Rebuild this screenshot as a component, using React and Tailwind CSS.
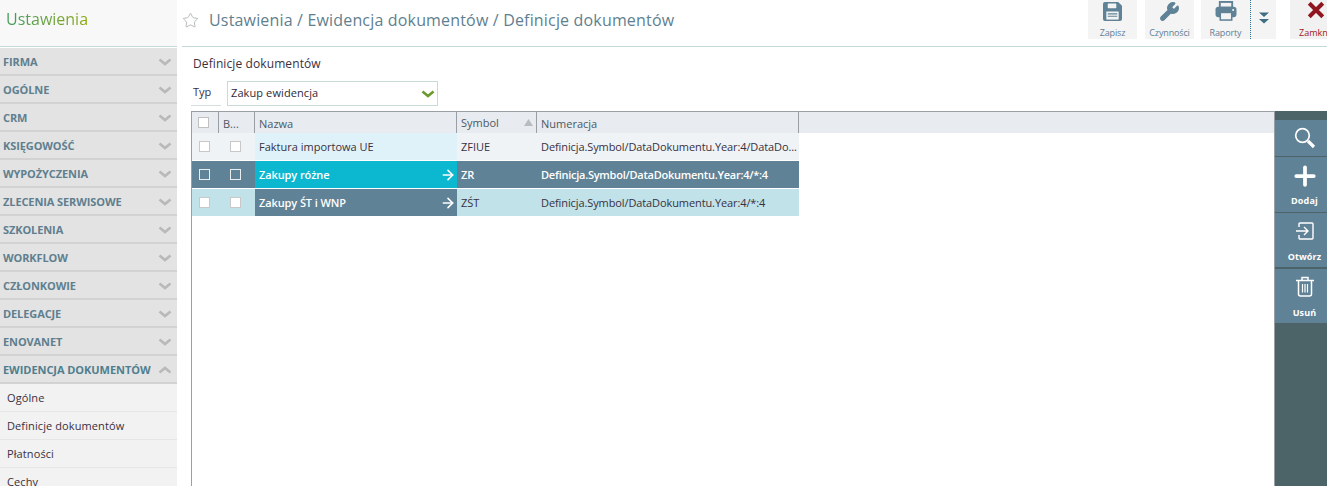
import React from 'react';
import { Star, Wrench, Plus, ArrowRight } from 'lucide-react';

const menu = [
  "FIRMA", "OGÓLNE", "CRM", "KSIĘGOWOŚĆ", "WYPOŻYCZENIA", "ZLECENIA SERWISOWE",
  "SZKOLENIA", "WORKFLOW", "CZŁONKOWIE", "DELEGACJE", "ENOVANET"
];
const subMenu = ["Ogólne", "Definicje dokumentów", "Płatności", "Cechy"];

const Chevron = ({ up }) => (
  <svg width="14" height="8" viewBox="0 0 14 8" className={up ? "rotate-180" : ""}>
    <path d="M1.5 1.5 L7 6 L12.5 1.5" fill="none" stroke="#b9b9b9" strokeWidth="2.6" />
  </svg>
);

const Floppy = () => (
  <svg width="19" height="19" viewBox="0 0 20 20">
    <path d="M2 0h14l4 4v14a2 2 0 0 1-2 2H2a2 2 0 0 1-2-2V2a2 2 0 0 1 2-2z" fill="#5f8296" />
    <rect x="5" y="1.5" width="9" height="5" rx="0.5" fill="#f4f4f4" />
    <rect x="3.5" y="10" width="13" height="8.5" fill="#f4f4f4" />
    <path d="M5 12.5h10M5 15h10" stroke="#5f8296" strokeWidth="1.2" />
  </svg>
);

const Printer = () => (
  <svg width="24" height="20" viewBox="0 0 24 21">
    <rect x="5.5" y="1" width="13" height="6" fill="none" stroke="#5f8296" strokeWidth="2" />
    <rect x="1" y="6" width="22" height="11" rx="3" fill="#5f8296" />
    <rect x="6" y="12" width="12" height="8" fill="#f4f4f4" stroke="#5f8296" strokeWidth="1.6" />
    <circle cx="19.5" cy="9.5" r="1.1" fill="#f4f4f4" />
  </svg>
);

const ToolButton = ({ label, width, gap, children }) => (
  <div className={`${width} ${gap} h-[39px] bg-[#f4f4f4] flex flex-col items-center`}>
    <div className="h-[22px] flex items-center justify-center">{children}</div>
    <span className="mt-[4px] text-[9px] leading-[13px] tracking-[-0.15px] text-[#5f7f96]">{label}</span>
  </div>
);

const Check = ({ dark, className }) => (
  <div className={`w-[11px] h-[11px] border ${dark ? "border-[#e8edf0]" : "border-[#c8c8c8] bg-white"} ${className}`} />
);

const SideAction = ({ label, className, children }) => (
  <div className={`bg-[#5f8296] flex flex-col items-center pl-[7px] text-white ${className}`}>
    {children}
    {label && <span className="text-[9px] font-bold leading-[14px] tracking-[0.15px]">{label}</span>}
  </div>
);

const CheckCells = ({ dark }) => (
  <>
    <div className="w-[27px] h-full flex items-center justify-center pr-[2px]"><Check dark={dark} /></div>
    <div className="w-[36px] h-full flex items-center justify-center pr-[4px]"><Check dark={dark} /></div>
  </>
);

const App = () => {
  return (
    <div className="w-[1327px] h-[486px] overflow-hidden bg-white flex flex-col font-['Open_Sans',sans-serif]">
      {/* Top bar */}
      <header className="flex h-[47px] shrink-0">
        <div className="w-[177px] bg-[#f8f8f8] border-b border-[#c5d9dc] pl-[6px] flex items-center pb-[8px]">
          <span className="text-[16px] bg-gradient-to-r from-[#3f9a5a] to-[#8aa800] bg-clip-text text-transparent">Ustawienia</span>
        </div>
        <div className="flex-1 ml-[5px] border-b border-[#c5d9dc] flex items-start">
          <Star size={17} strokeWidth={1} className="text-[#9aa0a3] mt-[12px]" />
          <span className="text-[16px] leading-[22px] mt-[9px] ml-[10px] text-[#5f7f8f] tracking-[0.17px]">Ustawienia / Ewidencja dokumentów / Definicje dokumentów</span>
          <div className="ml-auto flex items-start">
            <ToolButton label="Zapisz" width="w-[49px]" gap="mr-2"><Floppy /></ToolButton>
            <ToolButton label="Czynności" width="w-[49px]" gap="mr-[7px]">
              <Wrench size={21} fill="#5f8296" stroke="#5f8296" strokeWidth={1.5} />
            </ToolButton>
            <ToolButton label="Raporty" width="w-[49px]" gap=""><Printer /></ToolButton>
            <div className="w-[26px] h-[39px] bg-[#f4f4f4] border-l border-dotted border-[#2f6f8f] flex items-center justify-center mr-[14px] pb-[4px]">
              <svg width="10" height="14" viewBox="0 0 11 14">
                <path d="M0 1h11L5.5 6zM0 8h11l-5.5 5z" fill="#3f6f85" />
              </svg>
            </div>
            <div className="w-[37px] h-[39px] bg-[#f1f1f1] flex flex-col overflow-hidden">
              <svg width="18" height="18" viewBox="0 0 20 20" className="mt-px mb-[7px] ml-[17px] shrink-0">
                <path d="M2.5 2.5l15 15M17.5 2.5l-15 15" stroke="#8f1520" strokeWidth="4.5" />
              </svg>
              <span className="text-[9px] leading-[13px] text-[#a01820] pl-[9px] whitespace-nowrap">Zamknij</span>
            </div>
          </div>
        </div>
      </header>

      <div className="flex flex-1 min-h-0 pt-px">
        {/* Sidebar */}
        <aside className="w-[177px] shrink-0 overflow-hidden">
          {menu.map((item) => (
            <div key={item} className="h-[28px] bg-[#e3e3e3] border-b-2 border-[#d2d2d2] flex items-center justify-between pt-[2px] pl-[3px] pr-[5px]">
              <span className="text-[11px] font-bold tracking-[-0.1px] text-[#5f7f8f]">{item}</span>
              <Chevron />
            </div>
          ))}
          <div className="h-[28px] bg-[#e3e3e3] border-b-2 border-[#d2d2d2] flex items-center justify-between pt-[2px] pl-[3px] pr-[5px]">
            <span className="text-[11px] font-bold tracking-[-0.05px] text-[#4f7f8f] whitespace-nowrap">EWIDENCJA DOKUMENTÓW</span>
            <Chevron up />
          </div>
          {subMenu.map((item) => (
            <div key={item} className="h-[28px] bg-[#f2f2f2] border-b border-[#e6e6e6] flex items-center pt-[2px] pl-[7px] text-[11px] tracking-[0.1px] text-[#3a3040]">
              {item}
            </div>
          ))}
        </aside>

        {/* Content */}
        <main className="flex-1 min-w-0 flex">
          <div className="flex-1 min-w-0 flex flex-col pl-[14px]">
            <div className="h-[33px] pl-[2px] pt-[7px] text-[12px] leading-[17px] tracking-[0.1px] text-[#3a3040]">Definicje dokumentów</div>
            <div className="flex h-[25px] items-stretch">
              <div className="w-[30px] border-b border-[#d5dfe0] pl-[2px] text-[11px] leading-[22px] text-[#3a3040]">Typ</div>
              <div className="w-[211px] ml-[6px] border border-[#c8dcd5] flex items-center justify-between pl-[3px] pr-[2px] text-[11px] tracking-[0.1px] text-[#2f2a35]">
                Zakup ewidencja
                <svg width="14" height="8" viewBox="0 0 14 8" className="mt-px">
                  <path d="M1.5 1.5 L7 6 L12.5 1.5" fill="none" stroke="#6a9a30" strokeWidth="2.6" />
                </svg>
              </div>
            </div>
            {/* Grid */}
            <div className="mt-[5px] flex-1 border-t border-l border-[#9a9ea5]">
              <div className="flex h-[21px] bg-[#e8ebef] text-[11px] text-[#4a5a66] items-stretch">
                <div className="w-[27px] border-r border-[#9a9ea5] flex items-center justify-center pr-[3px]">
                  <div className="w-[11px] h-[11px] border border-[#c0c0c0] bg-white" />
                </div>
                <div className="w-[36px] border-r border-[#9a9ea5] pl-1 leading-[23px]">B...</div>
                <div className="w-[202px] border-r border-[#9a9ea5] pl-1 leading-[23px]">Nazwa</div>
                <div className="w-[80px] border-r border-[#9a9ea5] pl-1 leading-[23px] flex items-center justify-between pr-[3px]">
                  Symbol
                  <svg width="9" height="7" viewBox="0 0 9 7"><path d="M0 7L4.5 0 9 7z" fill="#b8bcc0" /></svg>
                </div>
                <div className="w-[262px] border-r border-[#9a9ea5] pl-1 leading-[23px]">Numeracja</div>
              </div>
              <div className="flex w-[607px] h-[27px] mb-px items-center text-[11px] bg-[#eff3f6] text-[#3a3040]">
                <CheckCells />
                <div className="w-[202px] h-full flex items-center pl-1 pt-px bg-[#e0f2f9]">Faktura importowa UE</div>
                <div className="w-[80px] pl-1 pt-px">ZFIUE</div>
                <div className="w-[262px] pl-1 pt-px whitespace-nowrap tracking-[-0.1px]">Definicja.Symbol/DataDokumentu.Year:4/DataDo...</div>
              </div>
              <div className="flex w-[607px] h-[27px] mb-px items-center text-[11px] font-semibold bg-[#5f8296] text-white">
                <CheckCells dark />
                <div className="w-[202px] h-full flex items-center justify-between pl-1 pt-px pr-px tracking-[-0.1px] bg-[#0bb8cf]">
                  Zakupy różne
                  <ArrowRight size={16} strokeWidth={2.4} />
                </div>
                <div className="w-[80px] pl-1 pt-px">ZR</div>
                <div className="w-[262px] pl-1 pt-px whitespace-nowrap tracking-[-0.25px]">Definicja.Symbol/DataDokumentu.Year:4/*:4</div>
              </div>
              <div className="flex w-[607px] h-[27px] items-center text-[11px] bg-[#c0e2e8] text-[#3a3040]">
                <CheckCells />
                <div className="w-[202px] h-full flex items-center justify-between pl-1 pt-px pr-px tracking-[-0.1px] bg-[#5f8296] text-white font-semibold">
                  Zakupy ŚT i WNP
                  <ArrowRight size={16} strokeWidth={2.4} />
                </div>
                <div className="w-[80px] pl-1 pt-px">ZŚT</div>
                <div className="w-[262px] pl-1 pt-px whitespace-nowrap tracking-[-0.1px]">Definicja.Symbol/DataDokumentu.Year:4/*:4</div>
              </div>
            </div>
          </div>
          {/* Right actions */}
          <div className="w-[53px] shrink-0 mt-[63px] bg-[#4c6368] border-l border-[#9a9ea5] pt-[9px] flex flex-col">
            <SideAction className="h-[36px] justify-center">
              <svg width="22" height="22" viewBox="0 0 22 22">
                <circle cx="8.5" cy="8.5" r="6.8" fill="none" stroke="#fff" strokeWidth="1.7" />
                <path d="M14 14l6 6" stroke="#fff" strokeWidth="3.2" />
              </svg>
            </SideAction>
            <SideAction label="Dodaj" className="h-[55px] mt-px">
              <Plus size={30} strokeWidth={3} className="mt-[4px] mb-[3px]" />
            </SideAction>
            <SideAction label="Otwórz" className="h-[54px] mt-px">
              <svg width="18" height="18" viewBox="0 0 18 18" fill="none" stroke="#fff" strokeWidth="1.4" className="mt-[9px] mb-[10px]">
                <path d="M3 5V2a1 1 0 0 1 1-1h12a1 1 0 0 1 1 1v14a1 1 0 0 1-1 1H4a1 1 0 0 1-1-1v-3" />
                <path d="M0 9h12M8 5l4 4-4 4" />
              </svg>
            </SideAction>
            <SideAction label="Usuń" className="h-[54px] mt-[2px]">
              <svg width="18" height="21" viewBox="0 0 18 21" fill="none" stroke="#fff" strokeWidth="1.5" className="mt-[7px] mb-[9px]">
                <path d="M0 4.5h18M6 4V1.5h6V4" />
                <path d="M2.5 5v13a2 2 0 0 0 2 2h9a2 2 0 0 0 2-2V5" />
                <path d="M6.5 8v8.5M9 8v8.5M11.5 8v8.5" strokeWidth="1.2" />
              </svg>
            </SideAction>
          </div>
        </main>
      </div>
    </div>
  );
};

export default App;
